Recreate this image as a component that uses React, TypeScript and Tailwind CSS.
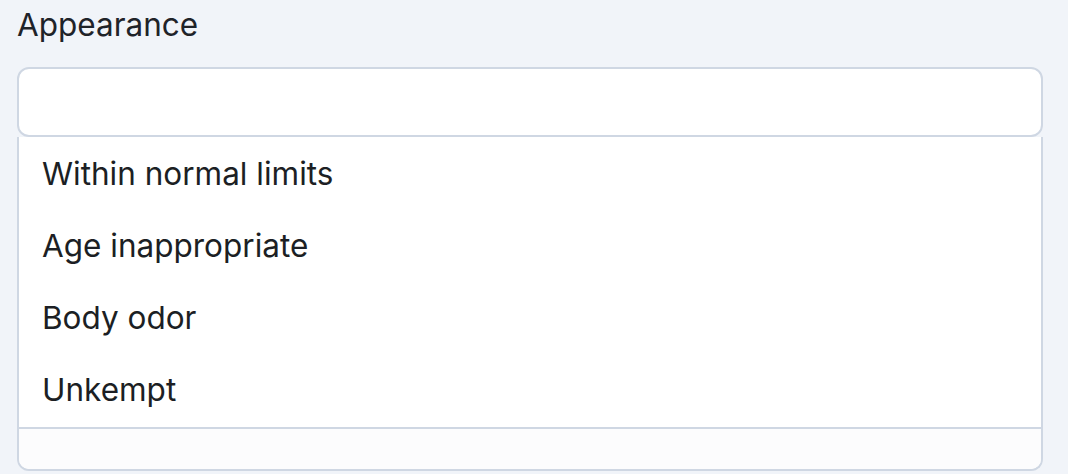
import React from "react";

const options = ["Within normal limits", "Age inappropriate", "Body odor", "Unkempt"];

export default function App() {
  return (
    <div
      className="w-[1068px] h-[474px] bg-[#f1f4f9] px-[17px] pt-[5px] overflow-hidden"
      style={{ fontFamily: "Inter, 'Noto Sans', sans-serif" }}
    >
      {/* Label */}
      <div className="text-[31.5px] leading-[40px] text-[#1f2329]">Appearance</div>

      {/* Input */}
      <div className="mt-[22px] w-[1026px] h-[70px] bg-white border-2 border-[#cfd7e3] rounded-[12px]" />

      {/* Dropdown */}
      <div className="w-[1026px] bg-white border-x-2 border-b-2 border-[#cfd7e3] rounded-b-[12px]">
        <div className="py-[1px]">
          {options.map((o) => (
            <div key={o} className="h-[72px] flex items-center pl-[23px] pr-[24px] text-[31.5px] text-[#1c1f24]">
              {o}
            </div>
          ))}
        </div>
        <div className="h-[42px] border-t-2 border-[#cfd7e3] bg-[#fcfcfd] rounded-b-[10px]" />
      </div>
    </div>
  );
}
